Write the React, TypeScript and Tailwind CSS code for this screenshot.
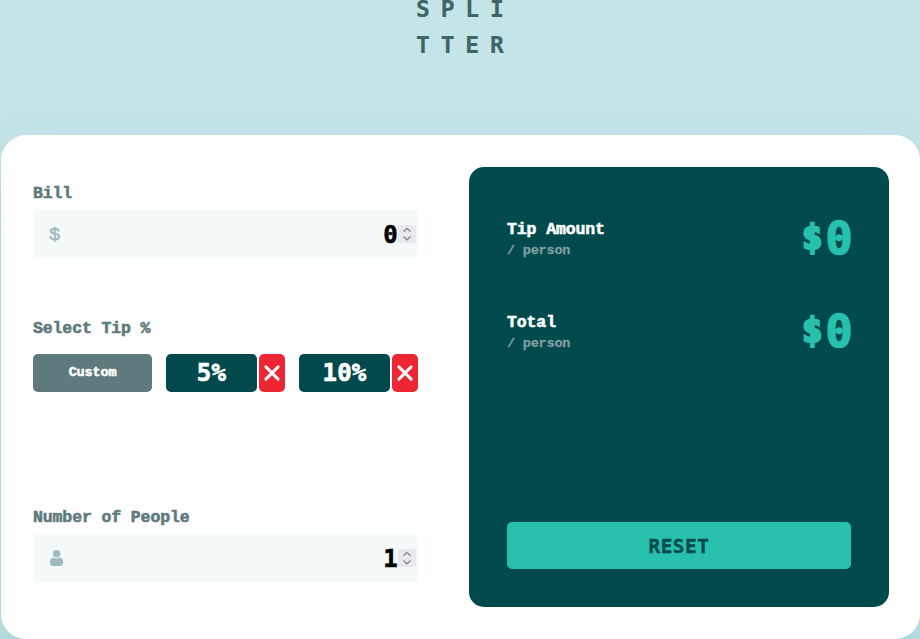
import { useState } from "react";

const mono = "font-['DejaVu_Sans_Mono','Liberation_Mono',monospace]";

function Spinner() {
  return (
    <span className="flex h-[18px] w-[18px] items-center justify-center bg-[#e9e8ed]">
      <svg width="18" height="18" viewBox="0 0 18 18" fill="none" stroke="#8f8f9b" strokeWidth="1.5">
        <path d="M5.500 6.600 9 3.500l3.500 3.100M5.500 11.600 9 14.700l3.500-3.100" />
      </svg>
    </span>
  );
}

function Field({ label, icon, value }: { label: string; icon: React.ReactNode; value: number }) {
  return (
    <div>
      <Label>{label}</Label>
      <div className="mt-[5px] flex h-12 items-center rounded-[5px] bg-[#f4fafa] pr-0.5 pl-4">
        {icon}
        <span className="ml-auto pt-0.5 text-[24px] leading-none tracking-[0.24px] text-black [-webkit-text-stroke:0.6px_black]">
          {value}
        </span>
        <Spinner />
      </div>
    </div>
  );
}

function Label({ children }: { children: React.ReactNode }) {
  return (
    <div className="h-6 font-['Liberation_Mono'] text-[16.5px] leading-[26px] tracking-[-0.12px] whitespace-pre text-[#5e7a7d] [-webkit-text-stroke:0.6px_#5e7a7d]">
      {children}
    </div>
  );
}

function TipOption({ value }: { value: string }) {
  return (
    <div className="flex gap-0.5">
      <button className="h-[38px] w-[91px] rounded-[5px] bg-[#00494d] text-[24px] leading-[39px] tracking-[0.2px] text-white [-webkit-text-stroke:0.7px_white]">
        {value}
      </button>
      <button aria-label="Remove" className="flex h-[38px] w-[26px] items-center justify-center rounded-[5px] bg-[#ee2533]">
        <svg width="18" height="18" viewBox="0 0 18 18" stroke="white" strokeWidth="2.9" strokeLinecap="round">
          <path d="m2.900 2.900 12.200 12.200M15.100 2.900 2.900 15.100" />
        </svg>
      </button>
    </div>
  );
}

function Amount({ title, value }: { title: string; value: number }) {
  return (
    <div className="flex h-[93px] items-start justify-between">
      <div className="pt-[2px] font-['Liberation_Mono']">
        <div className="h-[22px] text-[16.5px] leading-[25px] tracking-[-0.12px] text-white [-webkit-text-stroke:0.6px_white]">{title}</div>
        <div className="text-[13.5px] leading-[23px] tracking-[-0.2px] text-[#7f9c9f] [-webkit-text-stroke:0.3px_#7f9c9f]">/ person</div>
      </div>
      <div className="flex h-12 items-center text-[#26c0ab]">
        <span className="-mt-1 text-[34px] leading-[44px] tracking-[3px] [-webkit-text-stroke:2.4px_#26c0ab]">$</span>
        <span className="text-[45px] leading-[46px] tracking-[-1.5px] [-webkit-text-stroke:1.6px_#26c0ab]">{value}</span>
      </div>
    </div>
  );
}

export default function App() {
  const [bill, setBill] = useState(0);
  const [people, setPeople] = useState(1);

  return (
    <main className={`flex h-[639px] w-[920px] flex-col overflow-hidden bg-[#c5e4e7] font-bold ${mono}`}>
      <h1 className="h-[135px] shrink-0 pl-[416px] text-[23px] leading-9 tracking-[10.8px] text-[#3d6666] [-webkit-text-stroke:0.2px_#3d6666]">
        <div className="-mt-[9px]">SPLI</div>
        <div>TTER</div>
      </h1>
      <section className="ml-px flex h-[504px] shrink-0 rounded-[25px] bg-white pt-8 pl-8 shadow-[0_30px_50px_rgba(94,180,184,0.35)]">
        <div className="w-[385px] pt-[14px]">
          <Field
            label="Bill"
            value={bill}
            icon={<span className="pt-0.5 font-['Liberation_Mono'] text-[19px] font-normal text-[#9ebbbd] [-webkit-text-stroke:0.6px_#9ebbbd]">$</span>}
          />
          <div className="mt-[58px] h-[189px]">
            <Label>Select Tip %</Label>
            <div className="mt-[14px] flex justify-between">
              <button className="h-[38px] w-[119px] rounded-[5px] bg-[#5e7a7d] pt-px font-['Liberation_Mono'] text-[13.5px] tracking-[-0.15px] text-white [-webkit-text-stroke:0.5px_white]">
                Custom
              </button>
              <TipOption value="5%" />
              <TipOption value="10%" />
            </div>
          </div>
          <Field
            label="Number of People"
            value={people}
            icon={
              <svg width="15" height="18" viewBox="0 0 15 18" fill="#9ebbbd">
                <circle cx="7.6" cy="4.8" r="3.8" />
                <path d="M4 8.600c2 1.500 5 1.500 7.100 0 2 .3 3 2 3 4.600 0 2.400-.8 3.800-2.800 3.800H3.800C1.800 17 1 15.600 1 13.200c0-2.600 1-4.300 3-4.600Z" />
              </svg>
            }
          />
        </div>
        <div className="ml-[51px] flex h-[440px] w-[420px] flex-col rounded-[15px] bg-[#00494d] px-[38px] pt-[48px]">
          <Amount title="Tip Amount" value={0} />
          <Amount title="Total" value={0} />
          <button
            onClick={() => {
              setBill(0);
              setPeople(1);
            }}
            className="mt-auto mb-[38px] h-[47px] rounded-[5px] bg-[#26c0ab] text-[19.5px] leading-[49px] tracking-[0.5px] text-[#00494d] [-webkit-text-stroke:0.3px_#00494d]"
          >
            RESET
          </button>
        </div>
      </section>
    </main>
  );
}
